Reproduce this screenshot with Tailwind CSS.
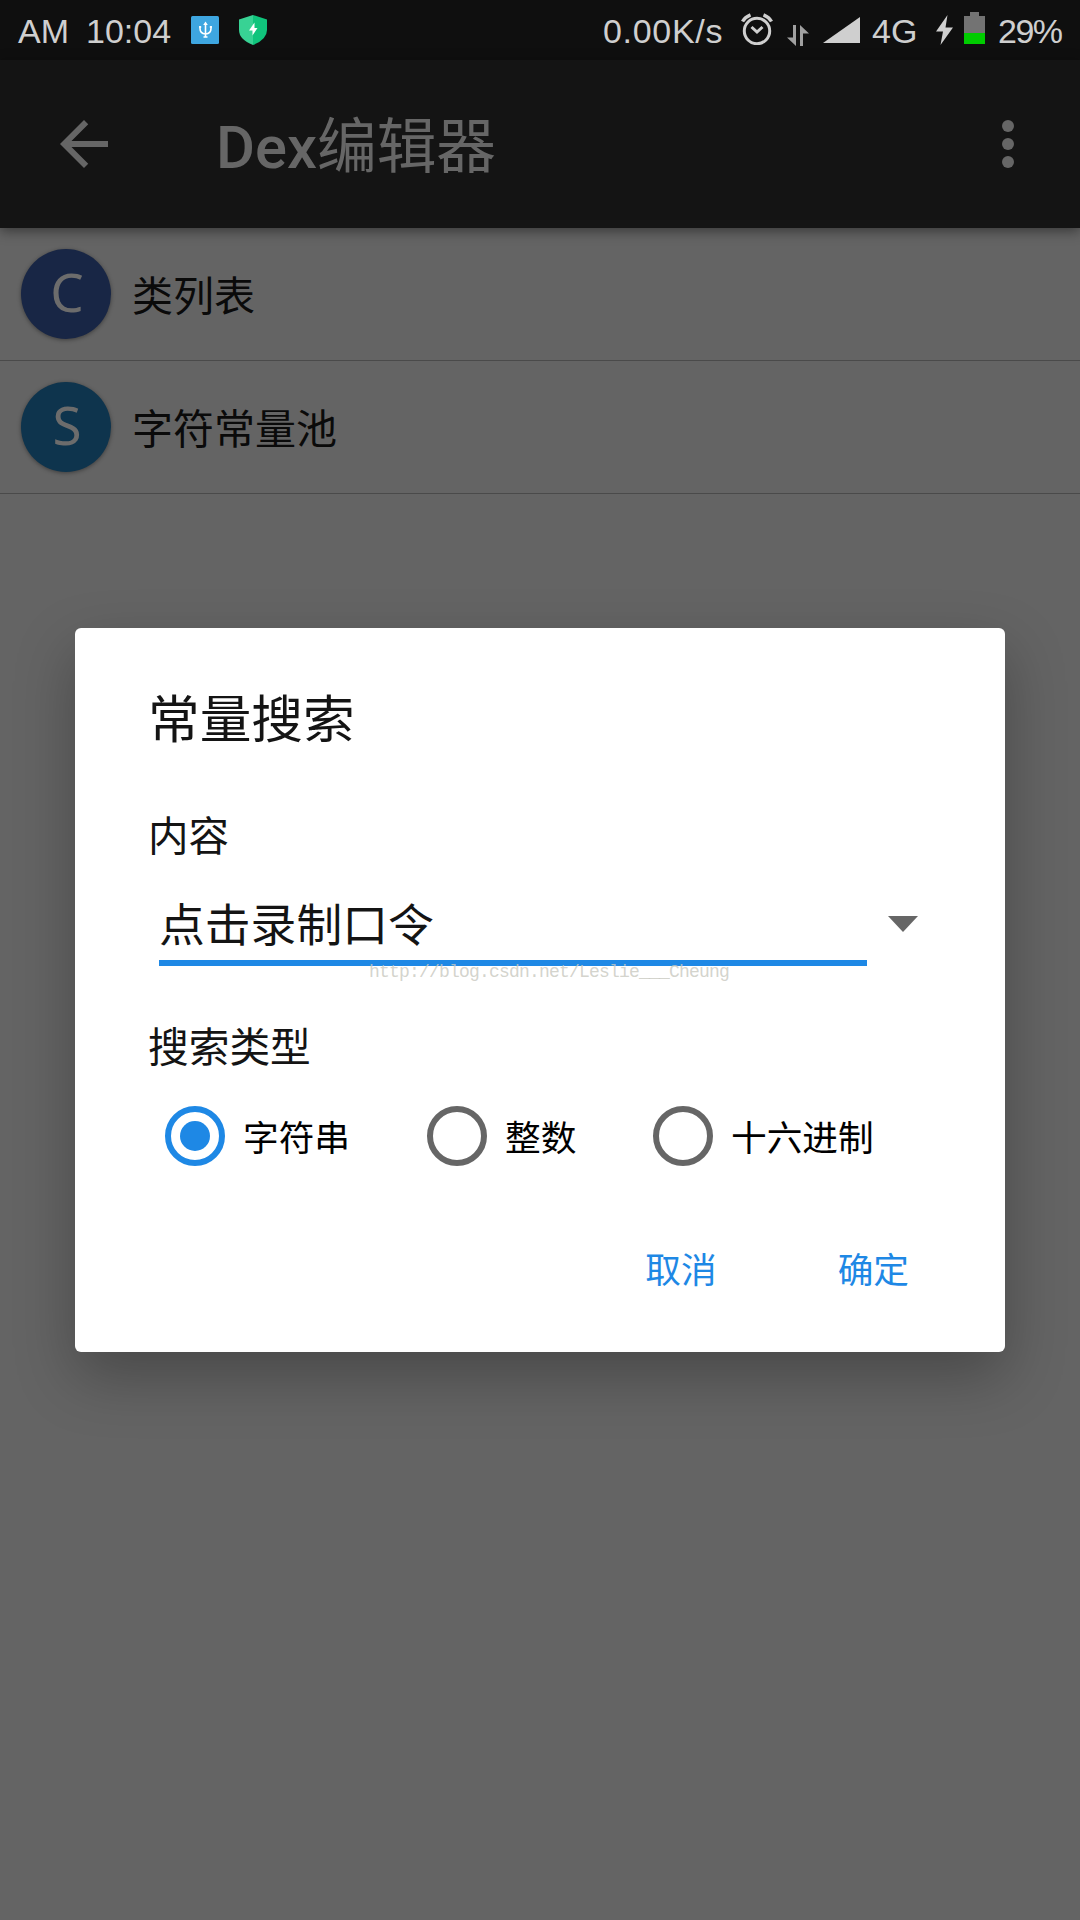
<!DOCTYPE html>
<html lang="zh-CN">
<head>
    <meta charset="UTF-8">
    <meta name="viewport" content="width=device-width, initial-scale=1.0">
    <title>Dex编辑器</title>
    <script src="https://cdn.jsdelivr.net/npm/@tailwindcss/browser@4"></script>
</head>
<body class="relative w-[1080px] h-[1920px] overflow-hidden bg-[#646464] font-['Roboto','Noto_Sans_CJK_SC',sans-serif]">
    <!-- Status bar -->
    <div class="flex items-center h-[60px] bg-[#0f0f0f] text-[#cfcfcf] text-[34px] leading-[60px] font-['Liberation_Sans',sans-serif] pl-[18px] pr-[17px]">
        <span class="w-[68px] pt-px">AM</span>
        <span class="w-[105px] pt-px">10:04</span>
        <svg class="w-7 h-7" viewBox="0 0 28 28" fill="none" stroke="#fff" stroke-width="1.6">
            <rect width="28" height="28" rx="1.5" fill="#3ea6e0" stroke="none"/>
            <path d="M14.500 8v13M9 10v2.500q0 5 5.500 5.500q5.500-.5 5.500-5.500V10M8 11h2.200M18.800 11H21M12.500 21h4"/>
            <path d="M14.500 5.500l2.300 3.500h-4.600z" fill="#fff" stroke="none"/>
        </svg>
        <svg class="w-7 h-[30px] ml-5" viewBox="0 0 28 30">
            <path d="M14 0L0 4.500V15q0 9.500 14 15z" fill="#38d294"/>
            <path d="M14 0l14 4.500V15q0 9.500-14 15z" fill="#10c47c"/>
            <path d="M15.500 7.500L10 15.500h3.500v5L18.500 13H15.500z" fill="#fff"/>
        </svg>
        <div class="ml-auto flex items-center">
            <span class="w-[138px] pt-px tracking-[0.7px]">0.00K/s</span>
            <svg class="w-8 h-8 -mt-0.5" viewBox="0 0 32 32" fill="none" stroke="#cfcfcf" stroke-width="3">
                <circle cx="16" cy="18" r="12.700"/>
                <path d="M10.500 14l5.500 5 5.500-5"/>
                <path d="M1.500 8.500Q4 4 9.500 1.800M30.500 8.500Q28 4 22.500 1.800" stroke-width="3.400"/>
            </svg>
            <svg class="w-[22px] h-[21px] ml-[14px] mt-2.5" viewBox="0 0 22 21" fill="#a0a0a0">
                <path d="M6 0h3v21L0 12.500h6zM13 0l9 8.500h-6V21h-3z"/>
            </svg>
            <svg class="w-[37px] h-[26px] ml-[14px]" viewBox="0 0 37 26"><path d="M37 0v26H0z" fill="#cfcfcf"/></svg>
            <span class="ml-3 w-[64px] pt-px">4G</span>
            <svg class="w-[17px] h-[30px]" viewBox="0 0 17 30"><path d="M11.500 0L0 16.500h7L4.500 30 17 12.500H9.500z" fill="#cfcfcf"/></svg>
            <svg class="w-[21px] h-8 ml-[11px] -mt-1" viewBox="0 0 21 32">
                <path d="M6 0h9v4h6v17H0V4h6z" fill="#737373"/>
                <path d="M0 21h21v11H0z" fill="#0c0"/>
            </svg>
            <span class="ml-[13px] w-[65px] pt-px tracking-[-1.5px]">29%</span>
        </div>
    </div>

    <!-- App bar -->
    <header class="relative flex items-center h-[168px] bg-[#141414] text-[#666] shadow-[0_3px_12px_rgba(0,0,0,0.45)]">
        <svg class="w-[72px] h-[72px] ml-12" viewBox="0 0 24 24" fill="currentColor"><path d="M20 11H7.830l5.590-5.590L12 4l-8 8 8 8 1.410-1.410L7.830 13H20z"/></svg>
        <h1 class="ml-[96px] pt-[8px] text-[59.700px] leading-[84px] font-medium">Dex<span class="font-normal">编辑器</span></h1>
        <svg class="w-[72px] h-[72px] ml-auto mr-9" viewBox="0 0 24 24" fill="currentColor">
            <circle cx="12" cy="6" r="2"/><circle cx="12" cy="12" r="2"/><circle cx="12" cy="18" r="2"/>
        </svg>
    </header>

    <!-- List -->
    <ul class="text-[41px] text-[#0a0a0a]">
        <li class="flex items-center h-[133px] pl-[21px] border-b border-[#4a4a4a]">
            <span class="w-[90px] h-[90px] rounded-full bg-[#182645] text-[#6c6c6c] text-[53px] leading-[86px] text-center pl-0.5 font-['Noto_Sans'] shadow-[0_1px_4px_rgba(0,0,0,0.4)]">C</span>
            <span class="ml-[21px] pt-[7px]">类列表</span>
        </li>
        <li class="flex items-center h-[133px] pl-[21px] border-b border-[#4a4a4a]">
            <span class="w-[90px] h-[90px] rounded-full bg-[#0e344d] text-[#6c6c6c] text-[53px] leading-[86px] text-center pl-0.5 font-['Noto_Sans'] shadow-[0_1px_4px_rgba(0,0,0,0.4)]">S</span>
            <span class="ml-[21px] pt-[7px]">字符常量池</span>
        </li>
    </ul>

    <!-- Search dialog -->
    <div class="absolute left-[75px] top-[628px] w-[930px] h-[724px] rounded-md bg-white text-[#141414] px-[73px] pt-[63px] shadow-[0_24px_60px_rgba(0,0,0,0.28)]">
        <h2 class="text-[51.700px] leading-[60px]">常量搜索</h2>
        <p class="mt-[61px] text-[40.500px] leading-[50px]">内容</p>
        <div class="flex mt-6">
            <div class="ml-[11px] w-[708px] h-20 border-b-6 border-[#1e88e5] text-[45.800px] leading-[81px]">点击录制口令</div>
            <svg class="w-[30px] h-4 ml-[21px] mt-[30px]" viewBox="0 0 30 16"><path d="M0 0h30L15 16z" fill="#666"/></svg>
        </div>
        <p class="mt-[57px] text-[40.700px] leading-[50px]">搜索类型</p>
        <div class="flex items-center mt-[33px] ml-[17px] text-[35.700px] leading-[66px] h-[60px] text-black">
            <label class="flex w-[262px] h-[60px]">
                <span class="flex items-center justify-center w-[60px] h-[60px] mr-[18px] rounded-full border-6 border-[#1e88e5]">
                    <span class="w-[30px] h-[30px] rounded-full bg-[#1e88e5]"></span>
                </span>字符串
            </label>
            <label class="flex w-[226px] h-[60px]"><span class="w-[60px] h-[60px] mr-[18px] rounded-full border-6 border-[#666]"></span>整数</label>
            <label class="flex h-[60px]"><span class="w-[60px] h-[60px] mr-[18px] rounded-full border-6 border-[#666]"></span>十六进制</label>
        </div>
        <div class="flex justify-end gap-[121px] mt-[75px] pr-[23px] text-[35.700px] leading-[60px] text-[#1e88e5]">
            <button>取消</button>
            <button>确定</button>
        </div>
        <span class="absolute left-[294px] top-[332px] text-[18px] tracking-[-0.800px] leading-6 text-[#c8c8c0]/80 font-['Liberation_Mono',monospace]">http://blog.csdn.net/Leslie___Cheung</span>
    </div>
</body>
</html>
